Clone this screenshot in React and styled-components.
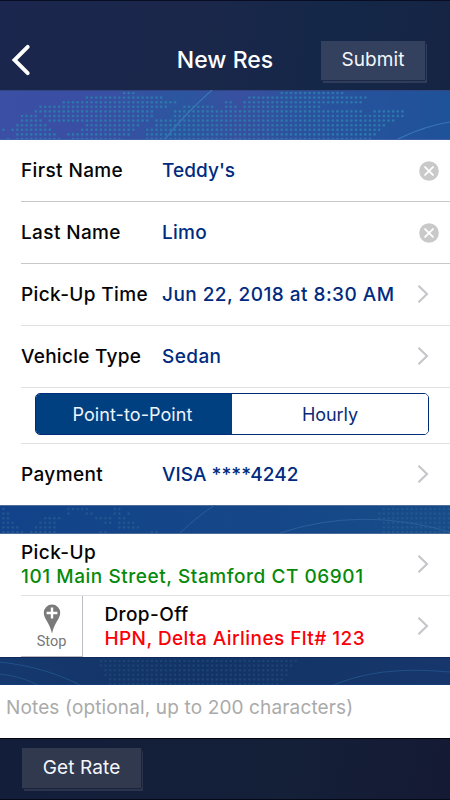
import React from "react";
import styled, { createGlobalStyle } from "styled-components";

const Global = createGlobalStyle`
  * { box-sizing: border-box; }
  html, body { margin: 0; padding: 0; }
  body { width: 450px; height: 800px; overflow: hidden; background: #0c1224; font-family: Inter, "Liberation Sans", sans-serif; }
`;

const Screen = styled.main`
  width: 450px;
  height: 800px;
  display: flex;
  flex-direction: column;
  overflow: hidden;
`;

const Header = styled.header`
  height: 90px;
  flex: none;
  display: grid;
  grid-template-columns: 130px 190px 130px;
  align-items: center;
  padding-top: 29px;
  border-top: 1px solid #080d24;
  background: linear-gradient(100deg, #1a264d 0%, #1a274a 45%, #142748 75%, #162443 100%);
`;

const Back = styled.button`
  border: 0;
  padding: 0 0 0 11px;
  background: none;
  display: flex;
`;

const Title = styled.h1`
  margin: 0;
  text-align: center;
  color: #fff;
  font-size: 23px;
  line-height: 30px;
  font-weight: 500;
  letter-spacing: 0.05px;
`;

const PlateButton = styled.button`
  width: ${(p) => p.$width}px;
  height: ${(p) => p.$height}px;
  margin: ${(p) => p.$margin || 0};
  padding: 0 0 2px;
  border: 0;
  background: ${(p) => p.$fill};
  box-shadow: 0 1px 0 ${(p) => p.$edge}, 1px 0 0 ${(p) => p.$edge}, 2px 3px 0 ${(p) => p.$shade};
  color: #f4f6fb;
  font-family: inherit;
  font-size: 19px;
  font-weight: 400;
  line-height: 1;
  letter-spacing: ${(p) => p.$track || 0}px;
`;

const Band = styled.div`
  height: ${(p) => p.$height}px;
  flex: none;
  background: ${(p) => p.$fill};
  border-top: 1px solid ${(p) => p.$top};
  border-bottom: 1px solid ${(p) => p.$bottom};
  svg { display: block; margin-top: -1px; }
`;

const Panel = styled.section`
  flex: none;
  background: #fff;
`;

const Row = styled.div`
  height: ${(p) => p.$height || 62}px;
  margin-left: 21px;
  padding-right: ${(p) => p.$right || 21}px;
  display: flex;
  align-items: center;
  border-bottom: ${(p) => (p.$line ? `1px solid ${p.$line}` : "0")};
`;

const Label = styled.span`
  width: 141px;
  flex: none;
  color: #050505;
  font-size: 19px;
  font-weight: 500;
  line-height: 24px;
  white-space: nowrap;
  letter-spacing: ${(p) => p.$track || 0.38}px;
`;

const Value = styled.span`
  flex: 1;
  color: #002b80;
  font-size: 19px;
  font-weight: 500;
  line-height: 24px;
  white-space: nowrap;
  padding-top: ${(p) => p.$drop || 0}px;
  letter-spacing: ${(p) => p.$track || 0}px;
`;

const SegmentRow = styled.div`
  height: 56px;
  margin-left: 21px;
  padding: 5px 21px 0 14px;
  border-bottom: 1px solid #e1e1e3;
`;

const Segments = styled.div`
  height: 42px;
  display: grid;
  grid-template-columns: 196px 1fr;
  border: 1px solid #002c78;
  border-radius: 5px;
  overflow: hidden;
`;

const Segment = styled.button`
  border: 0;
  padding: ${(p) => (p.$active ? "1px 3px 0 0" : "1px 0 0")};
  background: ${(p) => (p.$active ? "#004080" : "#fff")};
  color: ${(p) => (p.$active ? "#eef4fc" : "#0a2a78")};
  font-family: inherit;
  font-size: 18px;
  letter-spacing: ${(p) => (p.$active ? 0.08 : -0.1)}px;
`;

const Place = styled.div`
  flex: 1;
  padding-left: ${(p) => p.$indent || 0}px;
`;

const PlaceLine = styled.div`
  color: ${(p) => p.$color || "#050505"};
  font-size: 19px;
  font-weight: 500;
  line-height: 24px;
  white-space: nowrap;
  letter-spacing: ${(p) => p.$track || 0.42}px;
`;

const StopCell = styled.button`
  width: 62px;
  height: 61px;
  padding: 8px 0 0;
  border: 0;
  border-right: 1px solid #bcbcc2;
  border-bottom: 1px solid #bcbcc2;
  background: #fff;
  display: flex;
  flex-direction: column;
  align-items: center;
  color: #777;
  font-family: Roboto, sans-serif;
  font-size: 14.5px;
  font-weight: 400;
  line-height: 16px;
`;

const Notes = styled.div`
  height: 53px;
  flex: none;
  padding: 11px 6px 0;
  background: #fff;
  color: #aaa;
  font-size: 19px;
  line-height: 24px;
  white-space: nowrap;
  letter-spacing: 0.14px;
`;

const Footer = styled.footer`
  height: 62px;
  flex: none;
  padding: 9px 22px 0;
  border-top: 1px solid #02050c;
  border-bottom: 1px solid #050a18;
  background: linear-gradient(100deg, #131e3b 0%, #141f38 65%, #151a34 100%);
`;

const ChevronIcon = styled.svg`
  flex: none;
  margin-bottom: 2px;
`;

const Clear = () => (
  <svg width="20" height="20" viewBox="0 0 20 20">
    <circle cx="10" cy="10" r="9.8" fill="#c9c9c9" />
    <path d="M6.1 6.1 13.9 13.9M13.9 6.1 6.1 13.9" stroke="#fff" strokeWidth="1.9" strokeLinecap="round" />
  </svg>
);

const Chevron = () => (
  <ChevronIcon width="12" height="20" viewBox="0 0 12 20">
    <path d="M1.5 1.7 10 10 1.5 18.3" fill="none" stroke="#c5c5ca" strokeWidth="2.1" />
  </ChevronIcon>
);

const Pin = () => (
  <svg width="18" height="30" viewBox="0 0 18 30">
    <path d="M9 .6A8.2 8.2 0 0 0 .8 8.8C.8 15 6.6 18.5 9 29.5 11.4 18.5 17.2 15 17.2 8.8A8.2 8.2 0 0 0 9 .6Z" fill="#7a7a7a" />
    <path d="M9 3.6v10.800M3.600 9h10.800" stroke="#fff" strokeWidth="2.400" />
  </svg>
);

/* Each dot run is [row, first column, last column] on a 4.64px grid. */
const Dots = ({ runs, y, x = 3.4, color }) => (
  <g fill={color}>
    {runs.flatMap(([row, from, to]) =>
      Array.from({ length: to - from + 1 }, (_, i) => (
        <circle key={`${row}-${from + i}`} cx={x + (from + i) * 4.64} cy={y + row * 4.6} r="1.3" />
      ))
    )}
  </g>
);

const topMap = [
  [0, 26, 28], [0, 60, 73],
  [1, 18, 34], [1, 53, 78],
  [2, 13, 37], [2, 48, 49], [2, 52, 77],
  [3, 8, 35], [3, 39, 45], [3, 48, 50], [3, 52, 68],
  [4, 7, 32], [4, 37, 77], [4, 80, 86],
  [5, 4, 7], [5, 9, 32], [5, 37, 86],
  [6, 4, 8], [6, 10, 31], [6, 33, 84],
  [7, 3, 9], [7, 18, 29], [7, 33, 82],
  [8, 0, 0], [8, 2, 10], [8, 17, 28], [8, 31, 81],
  [9, 3, 11], [9, 14, 27], [9, 31, 80],
  [10, 1, 1], [10, 3, 12], [10, 15, 25], [10, 31, 79],
];
const midMap = [
  [0, 0, 0], [0, 14, 18], [0, 24, 25], [0, 82, 96],
  [1, 0, 1], [1, 14, 14], [1, 18, 19], [1, 24, 25], [1, 27, 27], [1, 81, 96],
  [2, 0, 1], [2, 9, 12], [2, 20, 23], [2, 25, 26], [2, 81, 96],
  [3, 0, 2], [3, 8, 11], [3, 22, 23], [3, 25, 28], [3, 82, 96],
  [4, 0, 3], [4, 7, 11], [4, 25, 29], [4, 82, 96],
  [5, 0, 4], [5, 6, 11], [5, 21, 22], [5, 32, 33], [5, 82, 96],
];
const lowMap = [
  [0, 21, 63], [1, 21, 62], [2, 22, 61], [3, 22, 61], [4, 23, 60], [5, 23, 59],
];

export default function App() {
  return (
    <>
      <Global />
      <Screen>
        <Header>
          <Back aria-label="Back">
            <svg width="22" height="32" viewBox="0 0 22 32">
              <path d="M16.700 2.800 3.500 16 16.700 29.200" fill="none" stroke="#fff" strokeWidth="3.900" strokeLinecap="round" />
            </svg>
          </Back>
          <Title>New Res</Title>
          <PlateButton $width={104} $height={39} $fill="#33415f" $edge="#1b2848" $shade="#303d5a" $margin="0 0 0 1px" $track={0.1}>Submit</PlateButton>
        </Header>
        <Band $height={50} $top="#314683" $bottom="#3d5fa5" $fill="linear-gradient(90deg, #3b4fa5 0%, #394fa3 25%, #2b569f 40%, #38509f 53%, #2b529e 68%, #1e5299 100%)">
          <svg width="450" height="49">
            <Dots runs={topMap} y={3} color="#2c78ad" />
            <path d="M164 50Q187 22 212 0M396 50Q424 36 450 32" fill="none" stroke="#3977b5" strokeWidth="1.200" />
          </svg>
        </Band>
        <Panel>
          <Row $line="#c8c8c8" $right={11}><Label>First Name</Label><Value $track={0.05}>Teddy's</Value><Clear /></Row>
          <Row $line="#c8c8c8" $right={11}><Label>Last Name</Label><Value $track={0.25}>Limo</Value><Clear /></Row>
          <Row $line="#e1e1e3"><Label>Pick-Up Time</Label><Value $drop={1} $track={0.46}>Jun 22, 2018 at 8:30 AM</Value><Chevron /></Row>
          <Row $line="#e1e1e3"><Label $track={0.27}>Vehicle Type</Label><Value $drop={1} $track={0.4}>Sedan</Value><Chevron /></Row>
          <SegmentRow>
            <Segments>
              <Segment $active>Point-to-Point</Segment>
              <Segment>Hourly</Segment>
            </Segments>
          </SegmentRow>
          <Row $height={61}><Label>Payment</Label><Value $track={0.03}>VISA ****4242</Value><Chevron /></Row>
        </Panel>
        <Band $height={29} $top="#526d98" $bottom="#4c6b98" $fill="linear-gradient(90deg, #12438a 0%, #154788 60%, #184c88 100%)">
          <svg width="450" height="28">
            <Dots runs={midMap} y={4} color="#22568f" />
            <path d="M180 28Q199 10 215 0M280 28Q361 1 450 27" fill="none" stroke="#28609a" strokeWidth="1" />
          </svg>
        </Band>
        <Panel>
          <Row $line="#e1e1e3">
            <Place>
              <PlaceLine>Pick-Up</PlaceLine>
              <PlaceLine $color="#078a0b" $track={0.55}>101 Main Street, Stamford CT 06901</PlaceLine>
            </Place>
            <Chevron />
          </Row>
          <Row $height={61}>
            <StopCell><Pin />Stop</StopCell>
            <Place $indent={21.4}>
              <PlaceLine>Drop-Off</PlaceLine>
              <PlaceLine $color="#fb0007" $track={0.43}>HPN, Delta Airlines Flt# 123</PlaceLine>
            </Place>
            <Chevron />
          </Row>
        </Panel>
        <Band $height={28} $top="#10295a" $bottom="#153b7c" $fill="linear-gradient(90deg, #15386e 0%, #123365 45%, #17376c 100%)">
          <svg width="450" height="28">
            <Dots runs={lowMap} y={4} color="#1d4374" />
            <path d="M0 5Q45 10 80 28M0 17Q20 19 38 28M334 28Q380 8 450 15" fill="none" stroke="#205087" strokeWidth="1.100" />
          </svg>
        </Band>
        <Notes>Notes (optional, up to 200 characters)</Notes>
        <Footer>
          <PlateButton $width={119} $height={40} $fill="#31394f" $edge="#1b243e" $shade="#2b344c" $track={0.12}>Get Rate</PlateButton>
        </Footer>
      </Screen>
    </>
  );
}
